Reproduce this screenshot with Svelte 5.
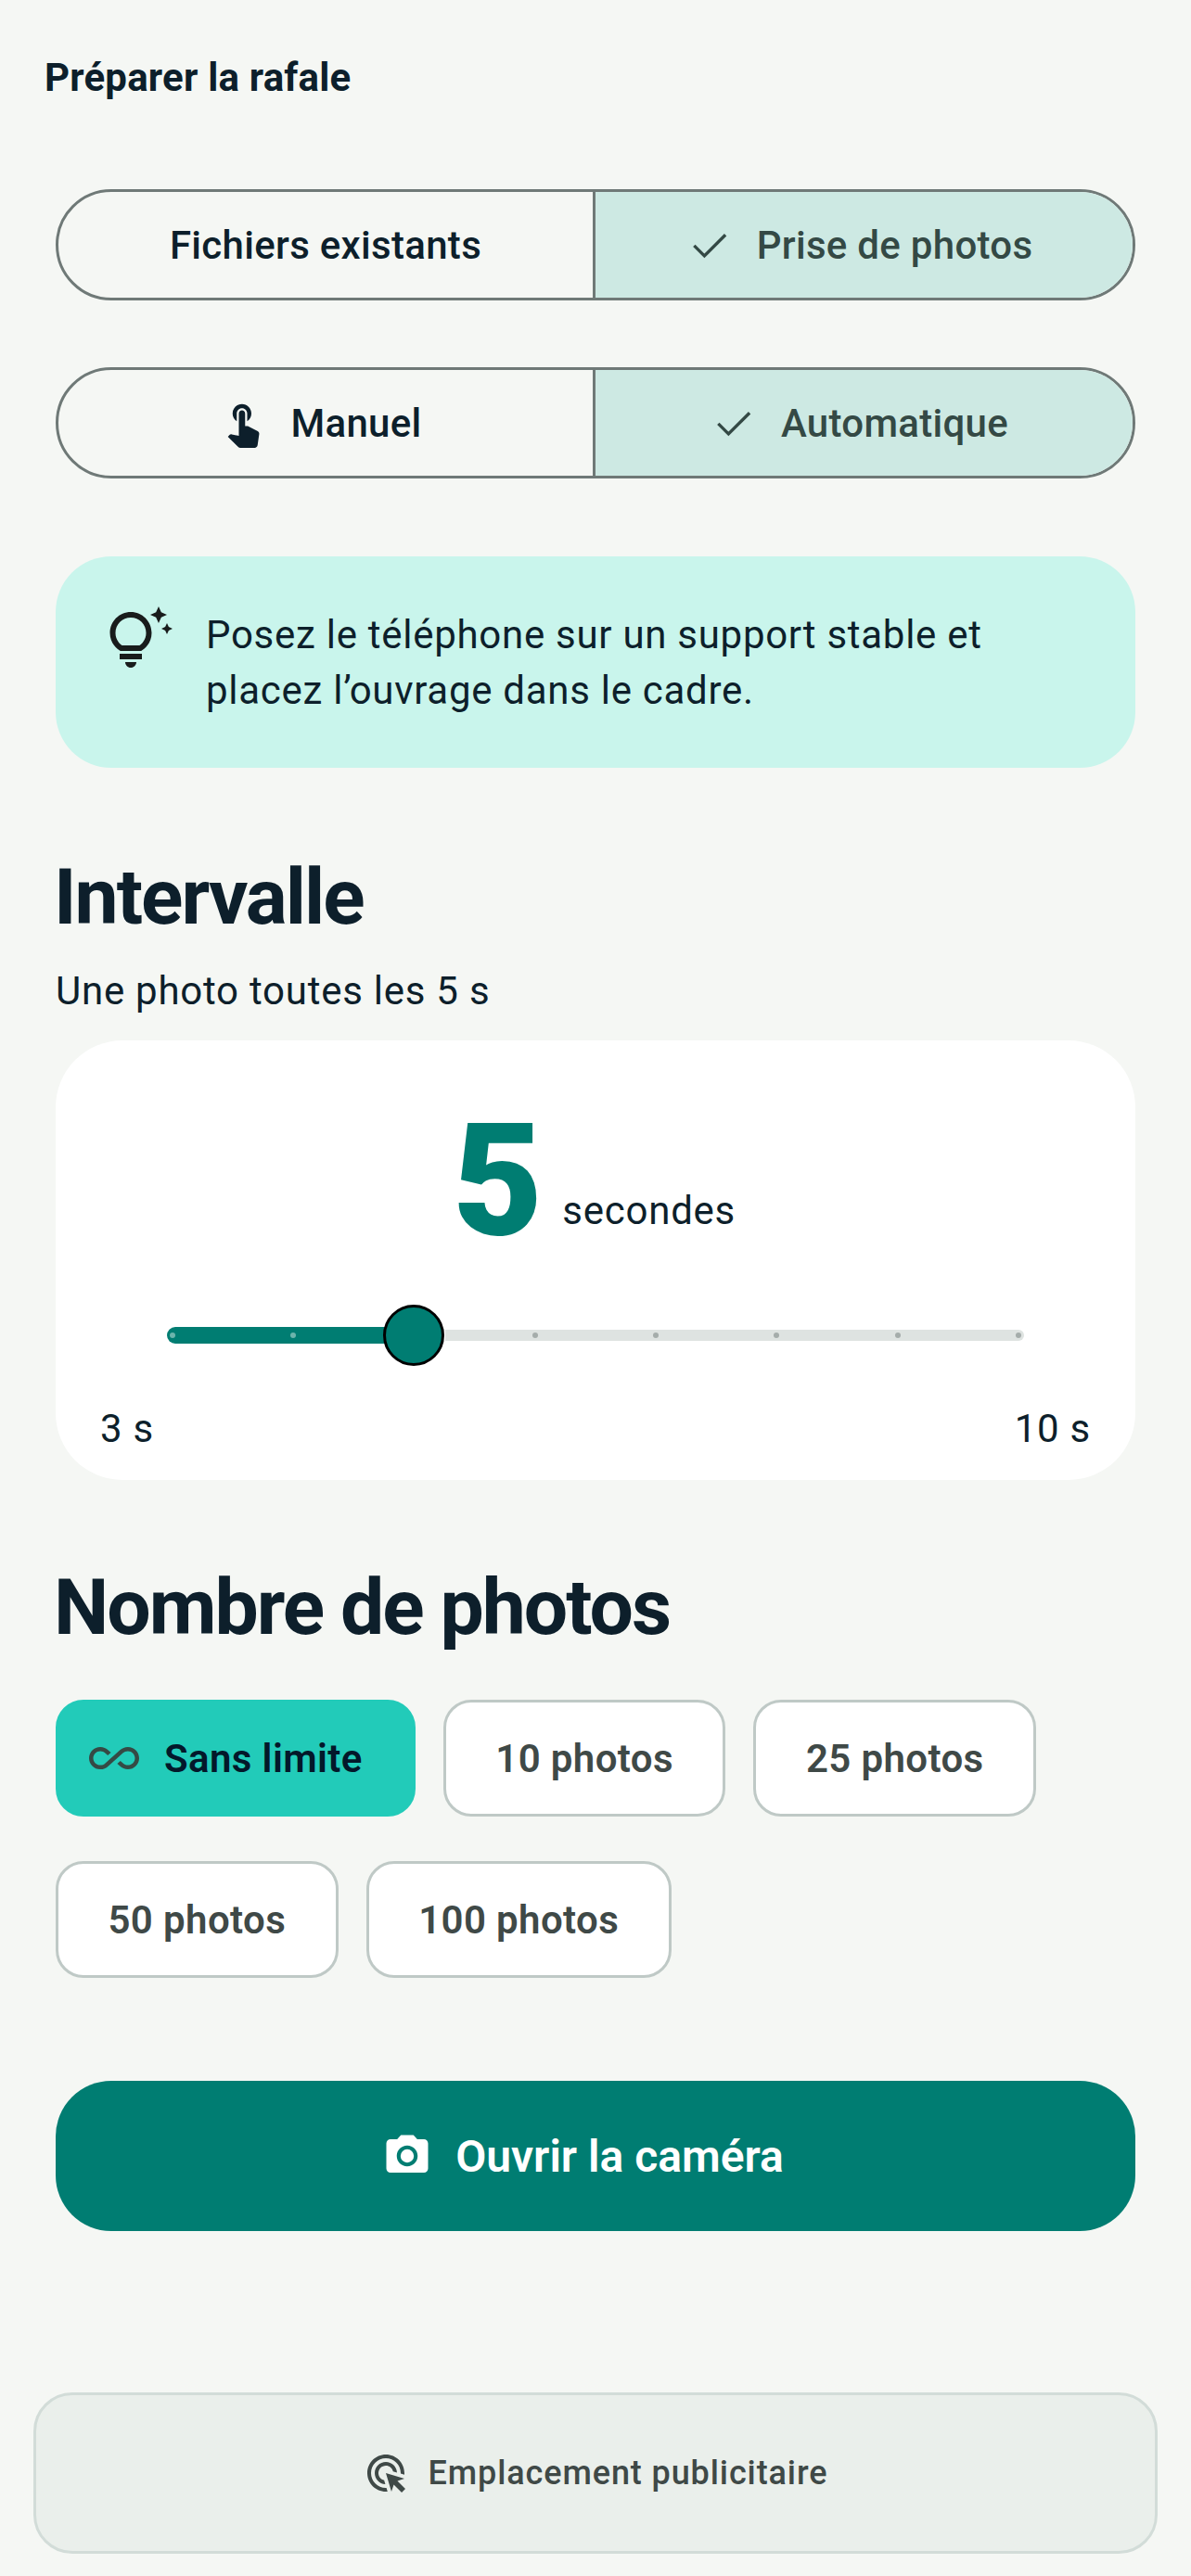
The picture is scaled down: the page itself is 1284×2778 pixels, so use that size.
<script>
  const COUNTS = ['10 photos', '25 photos', '50 photos', '100 photos'];
  const STOPS = [0, 1, 2, 3, 4, 5, 6, 7];
</script>

<div class="page">
  <h1 class="title">Préparer la rafale</h1>

  <div class="content">
    <div class="segments first">
      <button class="seg">Fichiers existants</button>
      <button class="seg on with-ico">
        <svg class="ico" viewBox="0 0 24 24"><polyline points="4.6,12.4 9.5,17.3 19.6,7.2" fill="none" stroke="currentColor" stroke-width="1.5" /></svg>
        Prise de photos
      </button>
    </div>

    <div class="segments">
      <button class="seg with-ico">
        <svg class="ico" viewBox="0 0 24 24"><path fill="currentColor" d="M9 11.24V7.5C9 6.12 10.12 5 11.5 5S14 6.12 14 7.5v3.74c1.21-.81 2-2.18 2-3.74C16 5.01 13.99 3 11.5 3S7 5.01 7 7.5c0 1.56.79 2.93 2 3.74zm9.84 4.63l-4.54-2.26c-.17-.07-.35-.11-.54-.11H13v-6c0-.83-.67-1.5-1.5-1.5S10 6.67 10 7.5v10.74l-3.43-.72c-.08-.01-.15-.03-.24-.03-.31 0-.59.13-.79.33l-.79.8 4.94 4.94c.27.27.65.44 1.06.44h6.79c.75 0 1.33-.55 1.44-1.28l.75-5.27c.01-.07.02-.14.02-.2 0-.62-.38-1.16-.91-1.38z" /></svg>
        Manuel
      </button>
      <button class="seg on with-ico">
        <svg class="ico" viewBox="0 0 24 24"><polyline points="4.6,12.4 9.5,17.3 19.6,7.2" fill="none" stroke="currentColor" stroke-width="1.5" /></svg>
        Automatique
      </button>
    </div>

    <div class="tip">
      <svg class="tip-ico" viewBox="0 0 24 24"><path fill="currentColor" d="M7,20h4c0,1.1-0.9,2-2,2S7,21.1,7,20z M5,19h8v-2H5V19z M16.5,9.5c0,3.82-2.66,5.86-3.77,6.5H5.27 C4.16,15.36,1.5,13.32,1.5,9.5C1.5,5.36,4.86,2,9,2S16.5,5.36,16.5,9.5z M14.5,9.5C14.5,6.47,12.03,4,9,4S3.5,6.47,3.5,9.5 c0,2.47,1.49,3.89,2.35,4.5h6.3C13.01,13.39,14.5,11.97,14.5,9.5z M21.37,7.37L20,8l1.37,0.63L22,10l0.63-1.37L24,8l-1.37-0.63L22,6 L21.37,7.37z M19,6l0.94-2.06L22,3l-2.06-0.94L19,0l-0.94,2.06L16,3l2.06,0.94L19,6z" /></svg>
      <p>Posez le téléphone sur un support stable et placez l’ouvrage dans le cadre.</p>
    </div>

    <h2 class="interval-head">Intervalle</h2>
    <p class="sub">Une photo toutes les 5 s</p>

    <div class="card">
      <div class="value">
        <span class="num">5</span>
        <span class="unit">secondes</span>
      </div>
      <div class="slider">
        <div class="track-on"></div>
        <div class="track-off"></div>
        <div class="ticks">
          {#each STOPS as s}
            <i class:light={s < 2} class:none={s === 2}></i>
          {/each}
        </div>
        <div class="thumb"></div>
      </div>
      <div class="range"><span>3 s</span><span>10 s</span></div>
    </div>

    <h2 class="count-head">Nombre de photos</h2>
    <div class="chips">
      <button class="chip sel">
        <svg class="ico inf" viewBox="0 0 24 24"><path fill="currentColor" d="M18.6 6.62c-1.44 0-2.8.56-3.77 1.53L12 10.66 10.48 12h.01L7.8 14.39c-.64.64-1.49.99-2.4.99-1.87 0-3.39-1.51-3.39-3.38S3.53 8.62 5.4 8.62c.91 0 1.76.35 2.44 1.03l1.13 1 1.51-1.34L9.22 8.2C8.2 7.18 6.84 6.62 5.4 6.62 2.42 6.62 0 9.04 0 12s2.42 5.38 5.4 5.38c1.44 0 2.8-.56 3.77-1.53l2.83-2.5.01.01L13.52 12h-.01l2.69-2.39c.64-.64 1.49-.99 2.4-.99 1.87 0 3.39 1.51 3.39 3.38s-1.52 3.38-3.39 3.38c-.9 0-1.76-.35-2.44-1.03l-1.14-1.01-1.51 1.34 1.27 1.12c1.02 1.01 2.37 1.57 3.82 1.57 2.98 0 5.4-2.41 5.4-5.38s-2.42-5.37-5.4-5.37z" /></svg>
        Sans limite
      </button>
      {#each COUNTS as c}
        <button class="chip">{c}</button>
      {/each}
    </div>

    <button class="cta">
      <svg class="ico" viewBox="0 0 24 24"><circle cx="12" cy="12" r="3.2" fill="currentColor" /><path fill="currentColor" d="M9 2L7.17 4H4c-1.1 0-2 .9-2 2v12c0 1.1.9 2 2 2h16c1.1 0 2-.9 2-2V6c0-1.1-.9-2-2-2h-3.17L15 2H9zm3 15c-2.76 0-5-2.24-5-5s2.24-5 5-5 5 2.24 5 5-2.24 5-5 5z" /></svg>
      Ouvrir la caméra
    </button>
  </div>

  <div class="ad">
    <svg class="ad-ico" viewBox="0 0 24 24"><path fill="currentColor" d="M11.71,17.99C8.53,17.84,6,15.22,6,12c0-3.31,2.69-6,6-6c3.22,0,5.84,2.53,5.99,5.71l-2.1-0.63C15.48,9.31,13.89,8,12,8 c-2.21,0-4,1.79-4,4c0,1.89,1.31,3.48,3.08,3.89L11.71,17.99z M22,12c0,0.3-0.01,0.6-0.04,0.9l-1.97-0.59C20,12.21,20,12.1,20,12 c0-4.42-3.58-8-8-8s-8,3.58-8,8s3.58,8,8,8c0.1,0,0.21,0,0.31-0.01l0.59,1.97C12.6,21.99,12.3,22,12,22C6.48,22,2,17.52,2,12 C2,6.48,6.48,2,12,2S22,6.48,22,12z M18.23,16.26L22,15l-10-3l3,10l1.26-3.77l4.27,4.27l1.97-1.97L18.23,16.26z" /></svg>
    <span>Emplacement publicitaire</span>
  </div>
</div>

<style>
  :global(body) {
    background: #f5f7f4;
  }
  .page {
    width: 1284px;
    height: 2778px;
    display: flex;
    flex-direction: column;
    box-sizing: border-box;
    font-family: Roboto, sans-serif;
    color: #0d1f2b;
    background: #f5f7f4;
    overflow: hidden;
  }
  .title {
    margin: 60px 48px 0;
    font-size: 42px;
    line-height: 48px;
    font-weight: 700;
    letter-spacing: 0.2px;
  }
  .content {
    display: flex;
    flex-direction: column;
    padding: 0 60px;
  }
  button {
    font-family: inherit;
    color: inherit;
    cursor: pointer;
  }

  .segments {
    display: grid;
    grid-template-columns: 1fr 1fr;
    height: 120px;
    margin-top: 72px;
    box-sizing: border-box;
    border: 3px solid #6f7977;
    border-radius: 60px;
    overflow: hidden;
  }
  .segments.first {
    margin-top: 96px;
  }
  .seg {
    display: flex;
    align-items: center;
    justify-content: center;
    gap: 24px;
    padding: 0;
    border: 0;
    background: transparent;
    font-size: 42px;
    font-weight: 500;
    letter-spacing: 0.3px;
  }
  .seg.with-ico {
    padding-right: 12px;
  }
  .seg:first-child {
    border-right: 3px solid #6f7977;
  }
  .seg.on {
    background: #cde9e3;
    color: #344945;
  }
  .ico {
    width: 54px;
    height: 54px;
    flex: none;
  }

  .tip {
    display: flex;
    gap: 36px;
    margin-top: 84px;
    padding: 54px;
    background: #c9f5ec;
    border-radius: 60px;
  }
  .tip-ico {
    width: 72px;
    height: 72px;
    flex: none;
    color: #191c1c;
  }
  .tip p {
    margin: 1px 0 -1px;
    font-size: 42px;
    line-height: 60px;
    letter-spacing: 0.72px;
  }

  h2 {
    margin: 0 0 0 -2px;
    font-size: 84px;
    line-height: 96px;
    font-weight: 700;
    letter-spacing: -2px;
  }
  .interval-head {
    margin-top: 92px;
  }
  .sub {
    margin: 23px 0 0;
    font-size: 42px;
    line-height: 60px;
    letter-spacing: 0.75px;
  }

  .card {
    margin-top: 23px;
    padding: 77px 48px 25px;
    background: #fff;
    border-radius: 72px;
  }
  .value {
    display: flex;
    justify-content: center;
    align-items: flex-end;
    gap: 21px;
    padding-right: 3px;
  }
  .num {
    font-size: 168px;
    line-height: 150px;
    font-weight: 900;
    color: #007d72;
  }
  .unit {
    font-size: 42px;
    line-height: 60px;
    letter-spacing: 0.75px;
    padding-bottom: 13px;
  }

  .slider {
    position: relative;
    height: 66px;
    margin: 58px 72px 0 72px;
  }
  .track-on,
  .track-off {
    position: absolute;
    top: 50%;
    transform: translateY(-50%);
  }
  .track-on {
    left: 0;
    width: 240px;
    height: 18px;
    background: #007d72;
    border-radius: 9px 0 0 9px;
  }
  .track-off {
    left: 300px;
    right: 0;
    height: 12px;
    background: #dee3e1;
    border-radius: 0 6px 6px 0;
  }
  .ticks {
    position: absolute;
    left: 3px;
    right: 3px;
    top: 30px;
    display: flex;
    justify-content: space-between;
  }
  .ticks i {
    width: 6px;
    height: 6px;
    border-radius: 50%;
    background: #a5adab;
  }
  .ticks i.light {
    background: #6cb4ac;
  }
  .ticks i.none {
    visibility: hidden;
  }
  .thumb {
    position: absolute;
    left: 233px;
    top: 0;
    width: 66px;
    height: 66px;
    box-sizing: border-box;
    background: #007d72;
    border: 3px solid #000;
    border-radius: 50%;
  }
  .range {
    display: flex;
    justify-content: space-between;
    margin-top: 38px;
    font-size: 42px;
    line-height: 60px;
    letter-spacing: 0.75px;
  }

  .count-head {
    margin-top: 90px;
  }
  .chips {
    display: flex;
    flex-wrap: wrap;
    gap: 48px 30px;
    margin-top: 51px;
  }
  .chip {
    display: flex;
    align-items: center;
    gap: 27px;
    height: 126px;
    padding: 0 53.5px;
    box-sizing: border-box;
    background: #fff;
    border: 3px solid #bfc9c6;
    border-radius: 30px;
    font-size: 42px;
    font-weight: 600;
    letter-spacing: 0.38px;
    color: #3f4947;
  }
  .chip.sel {
    background: #22cbb9;
    border-color: #22cbb9;
    color: #03182a;
    padding: 0 54px 0 33px;
  }
  .inf {
    color: #354a45;
  }

  .cta {
    display: flex;
    align-items: center;
    justify-content: center;
    gap: 25px;
    height: 162px;
    margin-top: 111px;
    padding: 0 27px 0 0;
    border: 0;
    background: #007d72;
    border-radius: 60px;
    color: #fff;
    font-size: 48px;
    font-weight: 600;
  }

  .ad {
    display: flex;
    align-items: center;
    justify-content: center;
    gap: 22px;
    height: 174px;
    margin: auto 36px 24px;
    box-sizing: border-box;
    background: #eaefeb;
    border: 3px solid #d2dcd8;
    border-radius: 42px;
    color: #3f4947;
    font-size: 36px;
    font-weight: 500;
    letter-spacing: 0.9px;
  }
  .ad-ico {
    width: 48px;
    height: 48px;
    flex: none;
  }
</style>
